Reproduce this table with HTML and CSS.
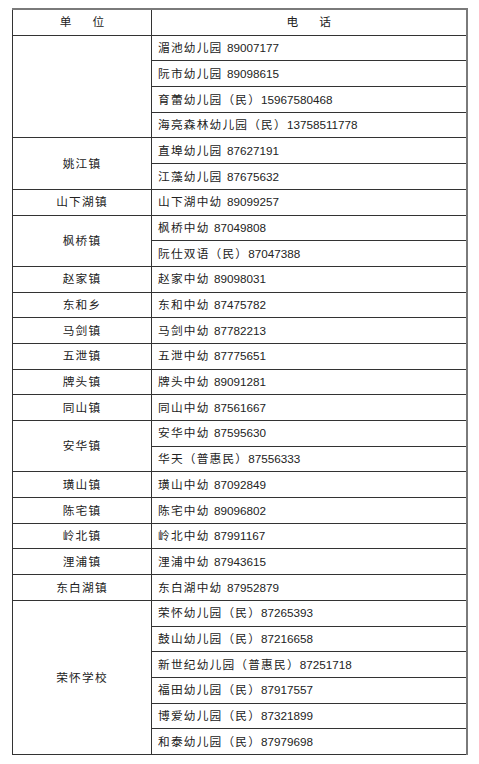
FILE: index.html
```html
<!DOCTYPE html>
<html lang="zh-CN">
<head>
<meta charset="utf-8">
<title>幼儿园电话</title>
<link rel="stylesheet" href="styles.css">
</head>
<body>
<table class="phone-table">
  <colgroup>
    <col class="col-unit">
    <col class="col-phone">
  </colgroup>
  <thead>
    <tr>
      <th class="head head-unit"><span class="head-text">单位</span></th>
      <th class="head head-phone"><span class="head-text">电话</span></th>
    </tr>
  </thead>
  <tbody>
    <tr><td class="unit" rowspan="4"></td><td class="phone">湄池幼儿园 <span class="num">89007177</span></td></tr>
    <tr><td class="phone">阮市幼儿园 <span class="num">89098615</span></td></tr>
    <tr><td class="phone">育蕾幼儿园（民）<span class="num">15967580468</span></td></tr>
    <tr><td class="phone">海亮森林幼儿园（民）<span class="num">13758511778</span></td></tr>

    <tr><td class="unit" rowspan="2">姚江镇</td><td class="phone">直埠幼儿园 <span class="num">87627191</span></td></tr>
    <tr><td class="phone">江藻幼儿园 <span class="num">87675632</span></td></tr>

    <tr><td class="unit">山下湖镇</td><td class="phone">山下湖中幼 <span class="num">89099257</span></td></tr>

    <tr><td class="unit" rowspan="2">枫桥镇</td><td class="phone">枫桥中幼 <span class="num">87049808</span></td></tr>
    <tr><td class="phone">阮仕双语（民）<span class="num">87047388</span></td></tr>

    <tr><td class="unit">赵家镇</td><td class="phone">赵家中幼 <span class="num">89098031</span></td></tr>
    <tr><td class="unit">东和乡</td><td class="phone">东和中幼 <span class="num">87475782</span></td></tr>
    <tr><td class="unit">马剑镇</td><td class="phone">马剑中幼 <span class="num">87782213</span></td></tr>
    <tr><td class="unit">五泄镇</td><td class="phone">五泄中幼 <span class="num">87775651</span></td></tr>
    <tr><td class="unit">牌头镇</td><td class="phone">牌头中幼 <span class="num">89091281</span></td></tr>
    <tr><td class="unit">同山镇</td><td class="phone">同山中幼 <span class="num">87561667</span></td></tr>

    <tr><td class="unit" rowspan="2">安华镇</td><td class="phone">安华中幼 <span class="num">87595630</span></td></tr>
    <tr><td class="phone">华天（普惠民）<span class="num">87556333</span></td></tr>

    <tr><td class="unit">璜山镇</td><td class="phone">璜山中幼 <span class="num">87092849</span></td></tr>
    <tr><td class="unit">陈宅镇</td><td class="phone">陈宅中幼 <span class="num">89096802</span></td></tr>
    <tr><td class="unit">岭北镇</td><td class="phone">岭北中幼 <span class="num">87991167</span></td></tr>
    <tr><td class="unit">浬浦镇</td><td class="phone">浬浦中幼 <span class="num">87943615</span></td></tr>
    <tr><td class="unit">东白湖镇</td><td class="phone">东白湖中幼 <span class="num">87952879</span></td></tr>

    <tr><td class="unit" rowspan="6">荣怀学校</td><td class="phone">荣怀幼儿园（民）<span class="num">87265393</span></td></tr>
    <tr><td class="phone">鼓山幼儿园（民）<span class="num">87216658</span></td></tr>
    <tr><td class="phone">新世纪幼儿园（普惠民）<span class="num">87251718</span></td></tr>
    <tr><td class="phone">福田幼儿园（民）<span class="num">87917557</span></td></tr>
    <tr><td class="phone">博爱幼儿园（民）<span class="num">87321899</span></td></tr>
    <tr><td class="phone">和泰幼儿园（民）<span class="num">87979698</span></td></tr>
  </tbody>
</table>
</body>
</html>
```

FILE: styles.css
```css
html, body {
  background: #ffffff;
}

body {
  margin: 8px 0 0 12px;
}

.phone-table {
  border-collapse: collapse;
  table-layout: fixed;
  width: 454px;
  font-family: "Liberation Sans", "Noto Sans CJK SC", sans-serif;
  font-size: 11.7px;
  color: #222222;
  letter-spacing: 1.2px;
  border-top: 2px solid #7a7a7a;
  border-right: 2px solid #7a7a7a;
}

.col-unit {
  width: 139px;
}

.col-phone {
  width: 315px;
}

.phone-table th,
.phone-table td {
  border: 1px solid #333333;
  height: 24.7px;
  padding: 0 6px;
  line-height: 1;
  vertical-align: middle;
  white-space: nowrap;
}

.phone-table th {
  font-weight: normal;
  text-align: center;
  border-top: 2px solid #7a7a7a;
}

.phone-table .head-phone {
  border-right: 2px solid #7a7a7a;
}

.phone-table .phone {
  border-right: 2px solid #7a7a7a;
}

.head-text {
  letter-spacing: 21px;
  padding-left: 21px;
}

.unit {
  text-align: center;
}

.phone {
  text-align: left;
}

.num {
  letter-spacing: 0;
}
```
